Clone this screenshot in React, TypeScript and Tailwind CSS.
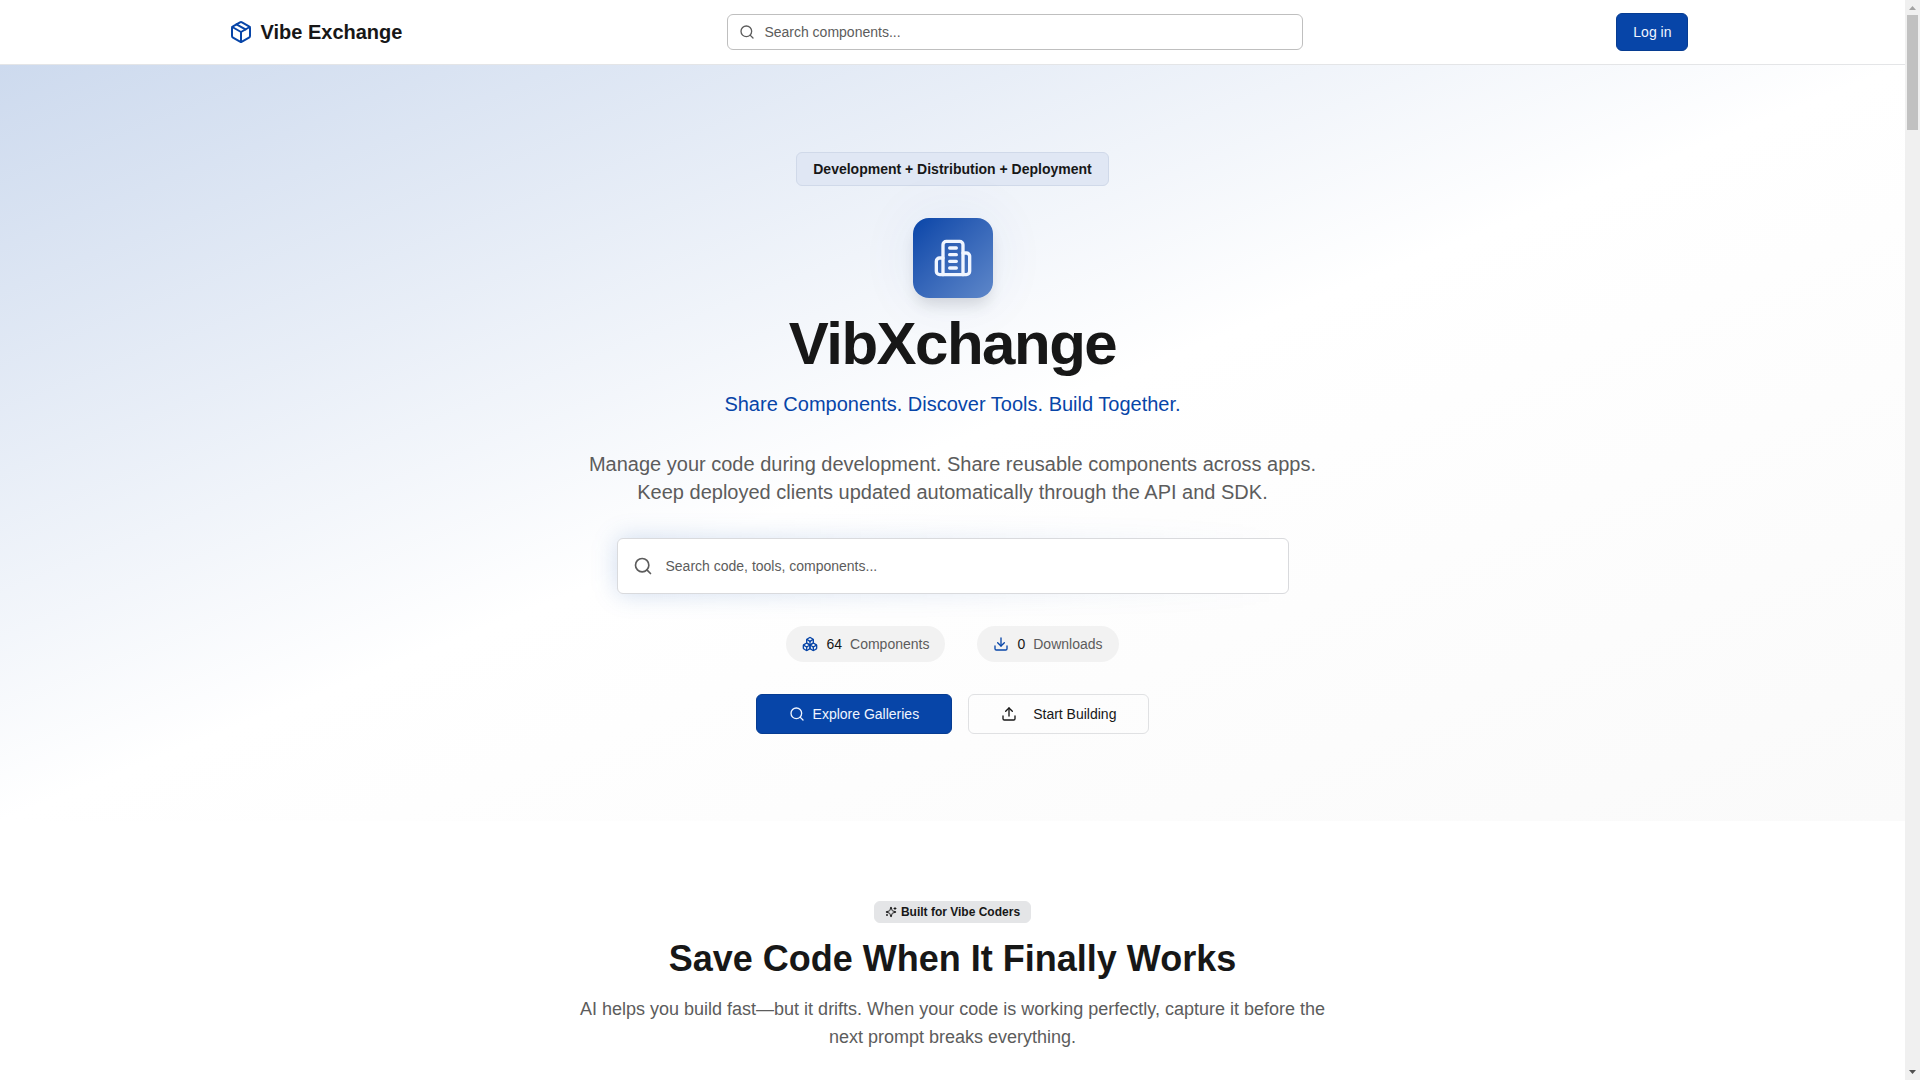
import React from 'react';
import { Boxes, Download, Search, Upload } from 'lucide-react';

const PackageIcon = ({ className }: { className?: string }) => (
    <svg viewBox="0 0 24 24" fill="none" stroke="currentColor" strokeWidth="2" strokeLinecap="round" strokeLinejoin="round" className={className}>
        <path d="M21 8a2 2 0 0 0-1-1.73l-7-4a2 2 0 0 0-2 0l-7 4A2 2 0 0 0 3 8v8a2 2 0 0 0 1 1.73l7 4a2 2 0 0 0 2 0l7-4A2 2 0 0 0 21 16Z" />
        <path d="m3.3 7 8.7 5 8.7-5" />
        <path d="M12 22V12" />
        <path d="m7.5 4.3 9 5.1" />
    </svg>
);

const BuildingIcon = ({ className }: { className?: string }) => (
    <svg viewBox="0 0 24 24" fill="none" stroke="currentColor" strokeWidth="2" strokeLinecap="round" strokeLinejoin="round" className={className}>
        <path d="M6 22V4a2 2 0 0 1 2-2h8a2 2 0 0 1 2 2v18Z" />
        <path d="M6 12H4a2 2 0 0 0-2 2v6a2 2 0 0 0 2 2h2" />
        <path d="M18 9h2a2 2 0 0 1 2 2v9a2 2 0 0 1-2 2h-2" />
        <path d="M10 6h4M10 10h4M10 14h4M10 18h4" />
    </svg>
);

const SparklesIcon = ({ className }: { className?: string }) => (
    <svg viewBox="0 0 24 24" fill="none" stroke="currentColor" strokeWidth="2" strokeLinecap="round" strokeLinejoin="round" className={className}>
        <path d="M9.937 15.5A2 2 0 0 0 8.5 14.063l-6.135-1.582a.5.5 0 0 1 0-.962L8.5 9.936A2 2 0 0 0 9.937 8.5l1.582-6.135a.5.5 0 0 1 .963 0L14.063 8.5A2 2 0 0 0 15.5 9.937l6.135 1.581a.5.5 0 0 1 0 .964L15.5 14.063a2 2 0 0 0-1.437 1.437l-1.582 6.135a.5.5 0 0 1-.963 0z" />
        <path d="M20 3v4M22 5h-4M4 17v2M5 18H3" />
    </svg>
);

const Header = () => (
    <header className="border-b border-[#e4e5e7] bg-white">
        <div className="mx-auto flex h-16 max-w-[1536px] items-center justify-between pr-8 pl-11">
            <a href="#" className="mr-3 flex items-center gap-2">
                <PackageIcon className="h-6 w-6 text-[#0745a8]" />
                <span className="text-xl font-bold">Vibe Exchange</span>
            </a>
            <label className="flex h-9 w-full max-w-xl items-center gap-[9px] rounded-md border border-[#bfbfbf] px-[11px]">
                <Search className="h-4 w-4 shrink-0 text-[#5c5c5c]" />
                <input
                    type="text"
                    aria-label="Search components"
                    placeholder="Search components..."
                    className="h-full w-full bg-transparent text-sm outline-none placeholder:text-[#5c5c5c]"
                />
            </label>
            <button className="h-[38px] rounded-md border border-[#063c92] bg-[#0745a8] px-4 text-sm text-[#f0f5ff]">Log in</button>
        </div>
    </header>
);

const Hero = () => (
    <section className="bg-[linear-gradient(to_bottom_right,#cddaee_0%,#ffffff_50%,#fafafa_100%)] px-4 pt-[87px] pb-[87px]">
        <div className="mx-auto flex max-w-4xl flex-col items-center text-center">
            <div className="rounded-md border border-[#d0d9e9] bg-[#e0e7f4] px-4 py-[6px] text-sm font-bold">
                Development + Distribution + Deployment
            </div>

            <div className="mt-8 flex h-20 w-20 items-center justify-center rounded-2xl bg-linear-to-br from-[#0745a8] to-[#5e87c9] text-[#f0f5ff] shadow-[0_0_60px_rgba(7,69,168,0.07),0_10px_15px_-3px_rgba(0,0,0,0.12)]">
                <BuildingIcon className="h-10 w-10" />
            </div>

            <h1 className="mt-4 text-6xl leading-[60px] font-bold tracking-tight">VibXchange</h1>
            <p className="mt-4 text-xl text-[#0745a8]">Share Components. Discover Tools. Build Together.</p>
            <p className="mt-8 max-w-3xl text-xl text-[#5c5c5c]">
                Manage your code during development. Share reusable components across apps. Keep deployed clients updated
                automatically through the API and SDK.
            </p>

            {/* Main search with a soft glow that fades to the right */}
            <div className="relative mt-8 w-full max-w-[672px]">
                <div className="absolute inset-0 rounded-lg bg-linear-to-r from-[#0745a8]/20 to-transparent blur-md"></div>
                <label className="relative flex h-14 items-center gap-[13px] rounded-md border border-[#d9dadd] bg-white px-[15px]">
                    <Search className="h-5 w-5 shrink-0 text-[#5c5c5c]" />
                    <input
                        type="text"
                        aria-label="Search code, tools, components"
                        placeholder="Search code, tools, components..."
                        className="h-full w-full bg-transparent text-sm outline-none placeholder:text-[#5c5c5c]"
                    />
                </label>
            </div>

            <div className="mt-8 flex gap-8 text-sm">
                <div className="flex items-center gap-2 rounded-full bg-[#f2f2f2] px-4 py-2">
                    <Boxes className="h-4 w-4 text-[#0745a8]" />
                    <span>64</span>
                    <span className="text-[#5c5c5c]">Components</span>
                </div>
                <div className="flex items-center gap-2 rounded-full bg-[#f2f2f2] px-4 py-2">
                    <Download className="h-4 w-4 text-[#0745a8]" />
                    <span>0</span>
                    <span className="text-[#5c5c5c]">Downloads</span>
                </div>
            </div>

            <div className="mt-8 flex gap-4 text-sm">
                <button className="flex h-10 items-center gap-2 rounded-md border border-[#063c92] bg-[#0745a8] px-8 text-[#f0f5ff]">
                    <Search className="h-4 w-4" />
                    Explore Galleries
                </button>
                <button className="flex h-10 items-center gap-4 rounded-md border border-[#e0e1e3] px-8">
                    <Upload className="h-4 w-4" />
                    Start Building
                </button>
            </div>
        </div>
    </section>
);

const SaveCode = () => (
    <section className="px-4 py-20">
        <div className="mx-auto flex max-w-3xl flex-col items-center text-center">
            <div className="flex items-center gap-1 rounded-md border border-[#e4e5e7] bg-[#e4e5e7] px-[10px] py-[2px] text-xs font-bold">
                <SparklesIcon className="h-3 w-3" />
                Built for Vibe Coders
            </div>
            <h2 className="mt-4 text-4xl font-bold">Save Code When It Finally Works</h2>
            <p className="mt-4 text-lg text-[#5c5c5c]">
                AI helps you build fast—but it drifts. When your code is working perfectly, capture it before the next prompt
                breaks everything.
            </p>
        </div>
    </section>
);

const ScrollTrack = () => (
    <div className="flex w-[15px] shrink-0 flex-col items-center justify-between bg-[#f0f0f0]" aria-hidden="true">
        <div className="flex w-full flex-col items-center">
            <svg viewBox="0 0 15 15" className="h-[15px] w-[15px]" fill="#a3a3a3">
                <path d="M4 10 7.500 6 11 10Z" />
            </svg>
            <div className="h-[115px] w-[11px] bg-[#c1c1c1]"></div>
        </div>
        <svg viewBox="0 0 15 15" className="h-[15px] w-[15px]" fill="#505050">
            <path d="M4 5h7L7.500 9Z" />
        </svg>
    </div>
);

export default function App() {
    return (
        <div className="flex h-screen overflow-hidden bg-white font-['Liberation_Sans',sans-serif] text-[#171717]">
            <main className="min-w-0 flex-1 overflow-hidden">
                <Header />
                <Hero />
                <SaveCode />
            </main>
            <ScrollTrack />
        </div>
    );
}
